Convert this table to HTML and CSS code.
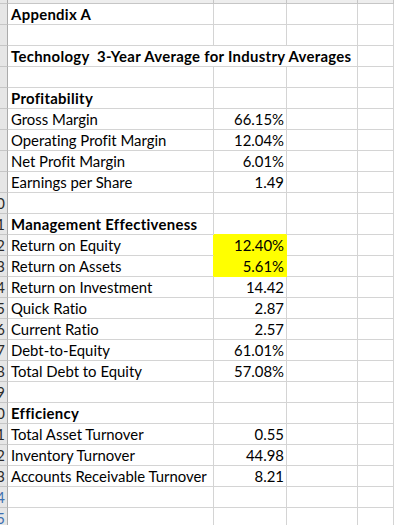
FILE: index.html
```html
<!DOCTYPE html>
<html>
<head>
<meta charset="utf-8">
<link rel="stylesheet" href="styles.css">
</head>
<body>
<div class="sheet">
  <div class="row top"><div class="hd"></div><div class="ch"></div><div class="ch"></div><div class="ch"></div><div class="ch last"></div></div>

  <div class="row"><div class="hd"></div><div class="c b">Appendix A</div><div class="c"></div><div class="c"></div><div class="c"></div></div>
  <div class="row"><div class="hd"></div><div class="c"></div><div class="c"></div><div class="c"></div><div class="c"></div></div>
  <div class="row"><div class="hd"></div><div class="c b span3 pre">Technology  3-Year Average for Industry Averages</div><div class="c"></div></div>
  <div class="row"><div class="hd"></div><div class="c"></div><div class="c"></div><div class="c"></div><div class="c"></div></div>
  <div class="row"><div class="hd"></div><div class="c b">Profitability</div><div class="c"></div><div class="c"></div><div class="c"></div></div>
  <div class="row"><div class="hd"></div><div class="c">Gross Margin</div><div class="c n">66.15%</div><div class="c"></div><div class="c"></div></div>
  <div class="row"><div class="hd"></div><div class="c">Operating Profit Margin</div><div class="c n">12.04%</div><div class="c"></div><div class="c"></div></div>
  <div class="row"><div class="hd"></div><div class="c">Net Profit Margin</div><div class="c n">6.01%</div><div class="c"></div><div class="c"></div></div>
  <div class="row"><div class="hd"></div><div class="c">Earnings per Share</div><div class="c n">1.49</div><div class="c"></div><div class="c"></div></div>
  <div class="row"><div class="hd"><span>0</span></div><div class="c"></div><div class="c"></div><div class="c"></div><div class="c"></div></div>
  <div class="row"><div class="hd"><span>1</span></div><div class="c b">Management Effectiveness</div><div class="c ybot"></div><div class="c"></div><div class="c"></div></div>
  <div class="row"><div class="hd"><span>2</span></div><div class="c yright">Return on Equity</div><div class="c n hl">12.40%</div><div class="c"></div><div class="c"></div></div>
  <div class="row"><div class="hd"><span>3</span></div><div class="c yright">Return on Assets</div><div class="c n hl">5.61%</div><div class="c"></div><div class="c"></div></div>
  <div class="row"><div class="hd"><span>4</span></div><div class="c">Return on Investment</div><div class="c n">14.42</div><div class="c"></div><div class="c"></div></div>
  <div class="row"><div class="hd"><span>5</span></div><div class="c">Quick Ratio</div><div class="c n">2.87</div><div class="c"></div><div class="c"></div></div>
  <div class="row"><div class="hd"><span>6</span></div><div class="c">Current Ratio</div><div class="c n">2.57</div><div class="c"></div><div class="c"></div></div>
  <div class="row"><div class="hd"><span>7</span></div><div class="c">Debt-to-Equity</div><div class="c n">61.01%</div><div class="c"></div><div class="c"></div></div>
  <div class="row"><div class="hd"><span>8</span></div><div class="c">Total Debt to Equity</div><div class="c n">57.08%</div><div class="c"></div><div class="c"></div></div>
  <div class="row"><div class="hd"><span>9</span></div><div class="c"></div><div class="c"></div><div class="c"></div><div class="c"></div></div>
  <div class="row"><div class="hd"><span>0</span></div><div class="c b">Efficiency</div><div class="c"></div><div class="c"></div><div class="c"></div></div>
  <div class="row"><div class="hd"><span>1</span></div><div class="c">Total Asset Turnover</div><div class="c n">0.55</div><div class="c"></div><div class="c"></div></div>
  <div class="row"><div class="hd"><span>2</span></div><div class="c">Inventory Turnover</div><div class="c n">44.98</div><div class="c"></div><div class="c"></div></div>
  <div class="row"><div class="hd"><span>3</span></div><div class="c">Accounts Receivable Turnover</div><div class="c n">8.21</div><div class="c"></div><div class="c"></div></div>
  <div class="row"><div class="hd"><span class="blue">4</span></div><div class="c"></div><div class="c"></div><div class="c"></div><div class="c"></div></div>
  <div class="row"><div class="hd"><span class="blue">5</span></div><div class="c"></div><div class="c"></div><div class="c"></div><div class="c"></div></div>
</div>
</body>
</html>
```

FILE: styles.css
```css
html, body {
  margin: 0;
  padding: 0;
  background: #ffffff;
  overflow: hidden;
}
.sheet {
  width: 394px;
  height: 525px;
  overflow: hidden;
  font-family: Lato, "Liberation Sans", sans-serif;
  font-size: 14.9px;
  font-variant-ligatures: none;
  color: #000;
}
.row {
  display: grid;
  grid-template-columns: 8px 206px 73px 71px 36px;
  height: 21px;
}
.row.top {
  height: 4px;
}
.hd {
  box-sizing: border-box;
  background: #e6e6e6;
  border-right: 1px solid #ababab;
  border-bottom: 1px solid #c6c6c6;
  overflow: hidden;
  display: flex;
  align-items: center;
  justify-content: flex-end;
  padding-right: 2px;
  color: #2b2b2b;
}
.hd span {
  display: block;
  line-height: 20px;
}
.hd span.blue {
  color: #3d6fb0;
}
.ch {
  box-sizing: border-box;
  background: #eeeeee;
  border-right: 1px solid #c6c6c6;
  border-bottom: 1px solid #c6c6c6;
}
.c {
  box-sizing: border-box;
  border-right: 1px solid #d4d4d4;
  border-bottom: 1px solid #d4d4d4;
  padding: 0 3px 1px 3px;
  display: flex;
  align-items: flex-end;
  white-space: nowrap;
  line-height: 18px;
  min-width: 0;
}
.c.b {
  font-weight: 700;
  letter-spacing: 0.3px;
}
.c.pre {
  white-space: pre;
}
.c.span3 {
  grid-column: span 3;
}
.c.n {
  justify-content: flex-end;
  padding-right: 2px;
}
.c.hl {
  background: #ffff00;
  border-right-color: #ffff00;
  border-bottom-color: #ffff00;
}
.c.ybot {
  border-bottom-color: #ffff00;
}
.c.yright {
  border-right-color: #ffff00;
}
```
